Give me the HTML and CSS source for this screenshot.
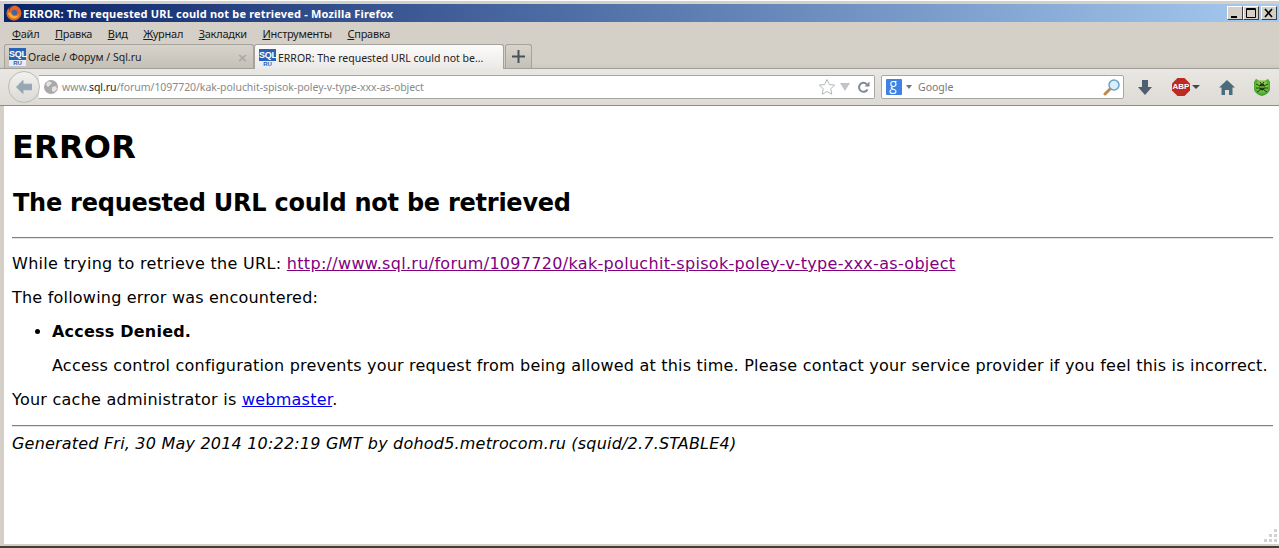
FILE: index.html
```html
<!DOCTYPE html>
<html lang="en">
<head>
<meta charset="utf-8">
<title>ERROR: The requested URL could not be retrieved - Mozilla Firefox</title>
<link rel="stylesheet" href="styles.css">
</head>
<body>
<div class="window">
  <header class="titlebar">
    <svg class="fx" width="16" height="16" viewBox="0 0 16 16"><circle cx="8" cy="8" r="7.5" fill="#2a4a8c"/><path d="M8.500 .5a7.500 7.500 0 1 1-8 8.500C.4 6.500 1.300 4.600 2.500 3.200c0 .9.300 1.500.9 2C4 3 6 1.200 8.500.5z" fill="#e8641c"/><path d="M2 7c0 3 2 6 6 6.500 2.500 0 5-2 5.500-5-1 2-3 3-5 2.500C6.500 11 5 9 5 7.500 4 8 2.800 8 2 7z" fill="#f6b02c"/><circle cx="8.500" cy="7.500" r="2.800" fill="#3d66b0"/></svg>
    <span class="title-text">ERROR: The requested URL could not be retrieved - Mozilla Firefox</span>
    <div class="winbtns">
      <span class="winbtn"><svg width="14" height="12" viewBox="0 0 14 12"><path d="M3 9h6v2H3z" fill="#000"/></svg></span>
      <span class="winbtn"><svg width="14" height="12" viewBox="0 0 14 12"><path d="M2.500 1.500h9v9h-9zM2.500 2.500h9" fill="none" stroke="#000"/></svg></span>
      <span class="winbtn"><svg width="14" height="12" viewBox="0 0 14 12"><path d="M3 2l7 8M10 2l-7 8" fill="none" stroke="#000" stroke-width="1.600"/></svg></span>
    </div>
  </header>
  <nav class="menubar">
    <span class="menu"><u>Ф</u>айл</span><span class="menu"><u>П</u>равка</span><span class="menu"><u>В</u>ид</span><span class="menu"><u>Ж</u>урнал</span><span class="menu"><u>З</u>акладки</span><span class="menu"><u>И</u>нструменты</span><span class="menu"><u>С</u>правка</span>
  </nav>
  <div class="tabbar">
    <div class="tab">
      <span class="sqlicon"><span class="sql-top">SQL</span><span class="sql-bot">RU</span></span>
      <span class="tab-label">Oracle / Форум / Sql.ru</span>
      <span class="tab-close">×</span>
    </div>
    <div class="tab tab-active">
      <span class="sqlicon"><span class="sql-top">SQL</span><span class="sql-bot">RU</span></span>
      <span class="tab-label">ERROR: The requested URL could not be...</span>
      <span class="tab-close">×</span>
    </div>
    <div class="newtab"><svg width="13" height="13" viewBox="0 0 13 13"><path d="M5.500 0h2v5.500H13v2H7.500V13h-2V7.500H0v-2h5.500z" fill="#46525e"/></svg></div>
  </div>
  <div class="navbar">
    <div class="backbtn"><svg width="20" height="18" viewBox="0 0 20 18"><path d="M9 2.500L2.500 9 9 15.500v-3.700h8.500V6.200H9z" fill="#97a6b4" stroke="#97a6b4" stroke-linejoin="round"/></svg></div>
    <div class="urlbar">
      <svg class="globe" width="16" height="16" viewBox="0 0 16 16"><circle cx="8" cy="8" r="7" fill="#a9a9a9"/><path d="M4 3c2-1 4 0 5 1L7 6 5 8 3 6zM9 8l4-1 1 3-3 3-2-1z" fill="#e2e2e2"/></svg>
      <span class="url"><span class="url-dim">www.</span><span class="url-host">sql.ru</span><span class="url-dim">/forum/1097720/kak-poluchit-spisok-poley-v-type-xxx-as-object</span></span>
      <svg class="star" width="18" height="18" viewBox="0 0 18 18"><path d="M9 1.500l2.300 5 5.400.6-4 3.700 1.100 5.400L9 13.500l-4.800 2.700 1.100-5.400-4-3.700 5.400-.6z" fill="#fff" stroke="#b4b8bc"/></svg>
      <svg class="dropm" width="10" height="8" viewBox="0 0 10 8"><path d="M0 0h10L5 8z" fill="#c0c4c8"/></svg>
      <svg class="reload" width="13" height="13" viewBox="0 0 13 13"><path d="M10.500 8.500A4.500 4.500 0 1 1 9.800 3.200" fill="none" stroke="#7d8a96" stroke-width="2"/><path d="M7.500 5.500h5V.5z" fill="#7d8a96"/></svg>
    </div>
    <div class="searchbar">
      <svg class="gicon" width="16" height="16" viewBox="0 0 16 16"><rect width="16" height="16" rx="1" fill="#3f82e4"/><path d="M10.500 2.500H7.200C5.500 2.500 4.800 3.800 4.800 5c0 1.500 1 2.500 2.500 2.500S10 6.500 10 5 9 2.500 7.500 2.500M6.500 7.800C5.500 8.500 5 9 5.300 9.500c.3.500 4.700 1 4.700 2.700 0 1.300-1.500 2.300-3 2.300s-3-.7-3-2c0-1.200 1.500-2 3-2.200" fill="none" stroke="#fff" stroke-width="1.100"/></svg>
      <svg class="gdrop" width="6" height="4" viewBox="0 0 6 4"><path d="M0 0h6L3 4z" fill="#6d7680"/></svg>
      <span class="search-text">Google</span>
      <svg class="mag" width="18" height="18" viewBox="0 0 18 18"><path d="M7.500 10.500L2 16" stroke="#c08a4a" stroke-width="3" stroke-linecap="round"/><circle cx="11" cy="7" r="5" fill="#d8eefb" stroke="#6f9fc4" stroke-width="1.500"/></svg>
    </div>
    <div class="tools">
      <svg class="t-down" width="14" height="15" viewBox="0 0 14 15"><path d="M4 0h6v7h4l-7 8-7-8h4z" fill="#4f5f6f"/></svg>
      <span class="abp"><svg width="18" height="18" viewBox="0 0 18 18"><path d="M5.500 0h7L18 5.500v7L12.500 18h-7L0 12.500v-7z" fill="#bd2a22"/></svg><span class="abp-text">ABP</span></span>
      <svg class="t-caret" width="8" height="4" viewBox="0 0 8 4"><path d="M0 0h8L4 4z" fill="#3c4a58"/></svg>
      <svg class="t-home" width="16" height="15" viewBox="0 0 16 15"><path d="M8 0l8 7.500h-2.500V15H10v-5H6v5H2.500V7.500H0z" fill="#4c6c7c"/></svg>
      <svg class="t-bug" width="16" height="18" viewBox="0 0 16 18"><defs><radialGradient id="bugfill" cx=".5" cy=".4" r=".6"><stop offset="0" stop-color="#c8ec50"/><stop offset="1" stop-color="#2f9a2a"/></radialGradient></defs><path d="M2 1l3 1.500h6L14 1l2 3v7c0 3-4 6-8 7-4-1-8-4-8-7V4z" fill="url(#bugfill)"/><path d="M2 6l3 1.500M14 6l-3 1.500M2 10h3M14 10h-3M3 14l3-2M13 14l-3-2M6 4l1.500 2M10 4L8.500 6" stroke="#17401a" stroke-width="1" fill="none"/><ellipse cx="8" cy="9" rx="3" ry="3.500" fill="#17401a"/><path d="M5.500 9h5" stroke="#c8ec50" stroke-width="1"/></svg>
    </div>
  </div>
  <main class="content">
    <h1>ERROR</h1>
    <h2>The requested URL could not be retrieved</h2>
    <hr>
    <p class="wide">While trying to retrieve the URL: <a class="visited" href="#u">http://www.sql.ru/forum/1097720/kak-poluchit-spisok-poley-v-type-xxx-as-object</a></p>
    <p>The following error was encountered:</p>
    <ul>
      <li><p><strong>Access Denied.</strong></p><p>Access control configuration prevents your request from being allowed at this time. Please contact your service provider if you feel this is incorrect.</p></li>
    </ul>
    <p class="cache">Your cache administrator is <a class="link" href="#m">webmaster</a>.</p>
    <hr class="hr2">
    <address>Generated Fri, 30 May 2014 10:22:19 GMT by dohod5.metrocom.ru (squid/2.7.STABLE4)</address>
    <svg class="grip" width="14" height="14" viewBox="0 0 14 14"><path d="M10 10h3v3h-3zM5 10h3v3H5zM0 10h3v3H0zM10 5h3v3h-3zM5 5h3v3H5zM10 0h3v3h-3z" fill="#d2d2d2"/></svg>
  </main>
</div>
</body>
</html>
```
FILE: styles.css
```css
* { box-sizing: border-box; }
html, body { margin: 0; padding: 0; height: 100%; overflow: hidden; }
body { background: #d4d0c8; font-family: "DejaVu Sans", sans-serif; }
.window {
  height: 548px;
  display: flex;
  flex-direction: column;
  background: #d4d0c8;
  border-top: 1px solid #fff;
  border-bottom: 2px solid #404038;
}
.titlebar {
  flex: none;
  height: 18px;
  margin: 3px 0 0 4px;
  display: flex;
  align-items: center;
  background: linear-gradient(90deg, #0a246a 0%, #a6caf0 100%);
  padding: 0 2px;
  color: #fff;
}
.fx { flex: none; margin-right: 1px; }
.title-text { font: bold 11px "Noto Sans", sans-serif; letter-spacing: .18px; white-space: nowrap; }
.winbtns { margin-left: auto; display: flex; gap: 0; }
.winbtn {
  width: 16px; height: 14px;
  display: flex; align-items: center; justify-content: center;
  background: #d4d0c8;
  border: 1px solid;
  border-color: #fff #404040 #404040 #fff;
}
.winbtn:last-child { margin-left: 2px; }
.menubar {
  flex: none;
  height: 22px;
  padding-left: 4px;
  display: flex;
  align-items: center;
  color: #1a1a1a;
}
.menu { padding: 0 7.500px 0 8px; white-space: nowrap; font: 11px "Noto Sans", sans-serif; letter-spacing: -.25px; }
.tabbar {
  flex: none;
  height: 25px;
  padding: 0 0 0 4px;
  display: flex;
  align-items: flex-end;
  border-bottom: 1px solid #a09e98;
  background: linear-gradient(#d4d0c8 0, #d4d0c8 80%, #cdc9c1 100%);
}
.tab {
  width: 250px;
  height: 24px;
  display: flex;
  align-items: center;
  padding: 1px 5px 0 4px;
  background: linear-gradient(#d8d4cc, #c4c0b8);
  border: 1px solid #a5a29b;
  border-bottom: 0;
  border-radius: 3px 3px 0 0;
  font: 10.500px "Noto Sans", sans-serif;
  color: #222;
}
.tab-active {
  background: linear-gradient(#fbfbfa, #ebe9e5);
  height: 25px;
  margin-bottom: -1px;
  position: relative;
  color: #222;
}
.sqlicon {
  flex: none;
  width: 17px; height: 18px;
  display: flex; flex-direction: column;
  font-family: "Liberation Sans", sans-serif;
  font-weight: bold;
  text-align: center;
  line-height: 1;
  margin-right: 2px;
}
.sql-top { background: #2a62b4; color: #fff; font-size: 9px; height: 12px; line-height: 12px; letter-spacing: -.2px; }
.sql-bot { background: #e8eef8; color: #1f5fb0; font-size: 6px; height: 6px; line-height: 6px; }
.tab-label { flex: 1; white-space: nowrap; overflow: hidden; }
.tab-close { flex: none; color: #a8a8a4; font: bold 13px/1 "DejaVu Sans", sans-serif; }
.tab-active .tab-close { display: none; }
.newtab {
  width: 27px; height: 24px;
  margin-left: 1px;
  display: flex;
  align-items: center;
  justify-content: center;
  background: linear-gradient(#d8d4cc, #c4c0b8);
  border: 1px solid #a5a29b;
  border-bottom: 0;
  border-radius: 3px 3px 0 0;
}
.navbar {
  flex: none;
  height: 37px;
  display: flex;
  align-items: center;
  padding-left: 4px;
  background: linear-gradient(#e9e7e3, #dedbd5);
  border-bottom: 1px solid #8e8c86;
}
.backbtn {
  flex: none;
  width: 32px; height: 32px;
  border-radius: 50%;
  margin-left: 4px;
  display: flex; align-items: center; justify-content: center;
  background: linear-gradient(#f2f1ee, #dcdad5);
  border: 1px solid #bdbbb5;
  position: relative;
  z-index: 1;
}
.urlbar {
  flex: none;
  width: 836px;
  height: 24px;
  margin-left: -1px;
  display: flex;
  align-items: center;
  background: #fff;
  border: 1px solid #a9a7a2;
  border-left: 0;
  border-radius: 0 2px 2px 0;
  padding-left: 4px;
  font: 10.500px "Noto Sans", sans-serif;
  letter-spacing: -.06px;
}
.globe { flex: none; margin-right: 3px; }
.url { flex: 1; white-space: nowrap; }
.url-dim { color: #8a8a8a; }
.url-host { color: #222; }
.star { flex: none; margin-right: 4px; }
.dropm { flex: none; margin-right: 7px; }
.reload { flex: none; margin-right: 4px; }
.searchbar {
  flex: none;
  width: 243px;
  height: 24px;
  margin-left: 6px;
  display: flex;
  align-items: center;
  background: #fff;
  border: 1px solid #a9a7a2;
  border-radius: 2px;
  padding: 0 2px 0 4px;
  font: 10.500px "Noto Sans", sans-serif;
}
.gicon { flex: none; }
.gdrop { flex: none; margin: 0 6px 0 4px; }
.search-text { flex: 1; color: #777; }
.mag { flex: none; }
.tools { flex: 1; display: flex; align-items: center; position: relative; padding-left: 14px; }
.t-down { flex: none; }
.abp { flex: none; position: relative; width: 18px; height: 18px; margin-left: 20px; }
.abp svg { display: block; }
.abp-text {
  position: absolute; inset: 0;
  text-align: center;
  color: #fff;
  font: bold 8px/18px "Liberation Sans", sans-serif;
}
.t-caret { flex: none; margin-left: 2px; }
.t-home { flex: none; margin-left: 19px; }
.t-bug { flex: none; margin-left: 19px; }
.content {
  flex: 1;
  min-height: 0;
  background: #fff;
  margin: 0 0 2px 4px;
  padding: 0 6px 0 8px;
  font-family: "DejaVu Sans", sans-serif;
  font-size: 16px;
  letter-spacing: .21px;
  color: #000;
  overflow: hidden;
  position: relative;
}
h1 { font-size: 32px; line-height: 38px; margin: 22px 0 0; letter-spacing: .2px; }
h2 { font-size: 24px; line-height: 28px; margin: 23px 0 0 1px; letter-spacing: -.25px; }
hr { margin: 20px 0 0; height: 2px; border: 0; border-top: 1px solid #808080; border-bottom: 1px solid #e4e4e4; }
p { margin: 16px 0 0; line-height: 18px; white-space: nowrap; }
.wide { letter-spacing: .31px; }
.cache { letter-spacing: .25px; }
ul { margin: 15px 0 0; padding-left: 40px; }
li p:first-child { margin-top: 0; }
.hr2 { margin-top: 16px; }
address { margin-top: 8px; line-height: 18px; font-style: italic; white-space: nowrap; letter-spacing: .2px; }
.visited { color: #800080; }
.link { color: #0000ee; }
.grip { position: absolute; right: 1px; bottom: 1px; }
```
